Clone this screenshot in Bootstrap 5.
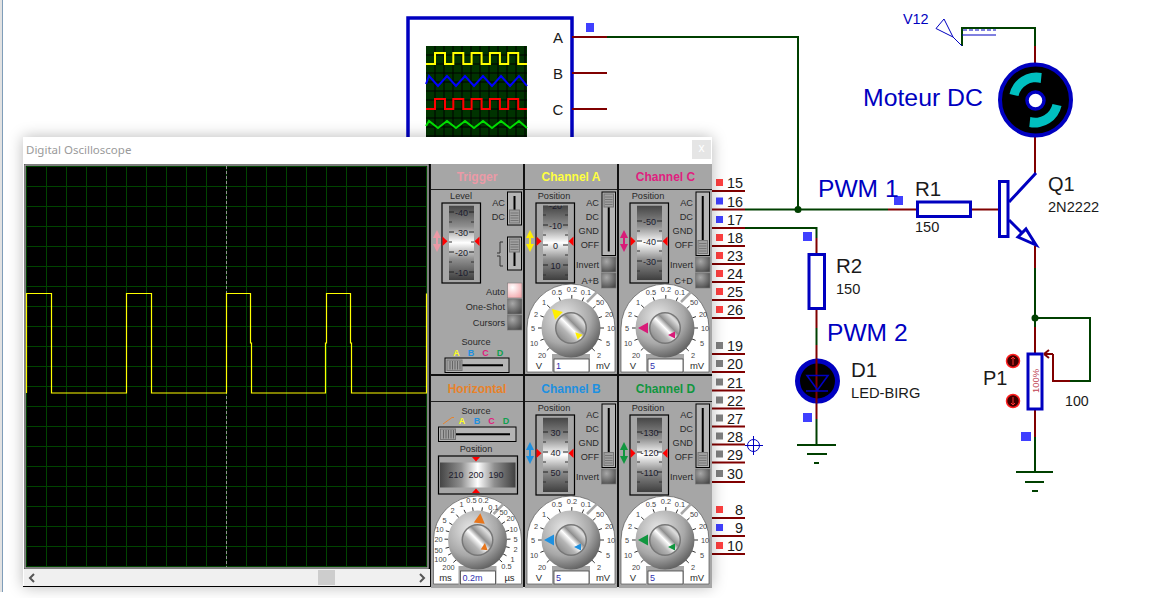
<!DOCTYPE html>
<html lang="fr">
<head>
  <meta charset="UTF-8">
  <title>Digital Oscilloscope</title>
  <link href="https://cdn.jsdelivr.net/npm/bootstrap@5.3.3/dist/css/bootstrap.min.css" rel="stylesheet">
  <style>
    body { background: #fff; overflow: hidden; font-family: "Liberation Sans", Arial, sans-serif; }
    .stage { width: 1154px; height: 598px; overflow: hidden; }
    .stage-edge { left: 0; top: 0; width: 3px; height: 592px; border-left: 2px solid #e2e2e2; border-right: 1px solid #7f9db9; }
    .sheet { left: 0; top: 0; }
    .sheet text { font-family: "Liberation Sans", Arial, sans-serif; }
    .scope-win { left: 23px; top: 137px; width: 689px; height: 450px; box-shadow: 0 0 14px rgba(0, 0, 0, .28); }
    .win-title { height: 27px; padding: 0 1px 2px 3px; }
    .win-title-text { font: 11.5px "Noto Sans", sans-serif; color: #9a9a9a; }
    .win-close { width: 19px; height: 19px; background: #e5e5e5; color: #fff; font-size: 12px; line-height: 17px; text-align: center; }
    .screen-col { width: 407px; padding-left: 1px; border-bottom: 1px solid #000; }
    .scope-screen { display: block; width: 406px; height: 405px; }
    .scroll-bar { height: 17px; width: 406px; background: #f0f0f0; padding: 0 4px; color: #555; }
    .scroll-thumb { left: 294px; top: 1px; width: 17px; height: 15px; background: #cdcdcd; }
    .scroll-arrow { width: 8px; height: 10px; }
    .panel-grid { display: grid; grid-template-columns: 92px 92px 93px; grid-template-rows: 210px 212px; gap: 2px; width: 282px; padding: 0 0 0 1px; background: #111; height: 423px; }
    .scope-panel { background: #a6a6a6; overflow: hidden; }
    .panel-head { height: 26px; border-bottom: 1px solid #222; font-weight: 700; font-size: 12px; line-height: 26px; text-align: center; }
    .panel-art { display: block; }
    .panel-art text { font-family: "Liberation Sans", Arial, sans-serif; }
  </style>
</head>
<body>
  <div class="stage position-relative">
    <svg width="0" height="0" class="position-absolute">
      <defs>
        <linearGradient id="drumV" x1="0" y1="0" x2="0" y2="1">
          <stop offset="0" stop-color="#454545"/><stop offset=".28" stop-color="#8f8f8f"/>
          <stop offset=".5" stop-color="#fff"/><stop offset=".72" stop-color="#8f8f8f"/><stop offset="1" stop-color="#3f3f3f"/>
        </linearGradient>
        <linearGradient id="drumH" x1="0" y1="0" x2="1" y2="0">
          <stop offset="0" stop-color="#454545"/><stop offset=".28" stop-color="#8f8f8f"/>
          <stop offset=".5" stop-color="#fff"/><stop offset=".72" stop-color="#8f8f8f"/><stop offset="1" stop-color="#3f3f3f"/>
        </linearGradient>
        <radialGradient id="btnGrey" cx=".35" cy=".3" r=".8">
          <stop offset="0" stop-color="#a8a8a8"/><stop offset="1" stop-color="#4a4a4a"/>
        </radialGradient>
        <radialGradient id="btnPink" cx=".35" cy=".3" r=".8">
          <stop offset="0" stop-color="#fff"/><stop offset="1" stop-color="#f2a8ac"/>
        </radialGradient>
        <radialGradient id="knobOut" cx=".38" cy=".32" r=".75">
          <stop offset="0" stop-color="#e8e8e8"/><stop offset=".6" stop-color="#a8a8a8"/><stop offset="1" stop-color="#555"/>
        </radialGradient>
        <linearGradient id="knobIn" x1="0" y1="1" x2="1" y2="0">
          <stop offset="0" stop-color="#777"/><stop offset=".35" stop-color="#b5b5b5"/><stop offset=".5" stop-color="#fff"/>
          <stop offset=".62" stop-color="#8f8f8f"/><stop offset=".8" stop-color="#ddd"/><stop offset="1" stop-color="#777"/>
        </linearGradient>
      </defs>
    </svg>

    <div class="stage-edge position-absolute"></div>

    <!-- schematic -->
    <svg class="sheet position-absolute" width="1154" height="598" viewBox="0 0 1154 598">
      <g id="instrument">
        <path d="M408 137V18H572V137" fill="#fff" stroke="#0000c0" stroke-width="3.5"/>
        <rect x="426" y="46" width="101" height="91" fill="#003300"/>
        <g id="miniGrid"></g>
        <g id="miniTraces" fill="none" stroke-width="2"></g>
        <g font-size="15" fill="#1a1a1a" text-anchor="middle">
          <text x="558" y="43">A</text><text x="558" y="79">B</text><text x="558" y="115">C</text>
        </g>
      </g>

      <g fill="none" stroke="#800000" stroke-width="2">
        <path d="M572 37H607M572 73H607M572 109H607"/>
        <path d="M888 209.5H916M972 209.5H1000"/>
        <path d="M816.5 238V253M816.5 310V328M816.5 345V419"/>
        <path d="M1035 46V63M1035 137V173M1035 246V268M1035 327V353M1035 410V437"/>
        <path d="M1070 381H1053V354"/>
        <path d="M1053 354H1044M1044 354L1049 350M1044 354L1049 358"/>
      </g>
      <g fill="none" stroke="#004000" stroke-width="2">
        <path d="M607 37H798V209.5"/>
        <path d="M745 209.5H888"/>
        <path d="M745 228H816.5V238"/>
        <path d="M816.5 328V345M816.5 419V445"/>
        <path d="M962 46V28H1035V46"/>
        <path d="M1035 268V327M1035 318H1090V381H1070M1035 437V472"/>
        <path d="M797 445H836M807 454H827M814 463H819"/>
        <path d="M1016 472H1053M1025 482H1044M1032 491H1038"/>
      </g>
      <circle cx="798" cy="209.5" r="3.5" fill="#004000"/>
      <circle cx="1035" cy="318" r="3.5" fill="#004000"/>

      <g id="pinRows"></g>

      <g fill="#4040ff">
        <rect x="586" y="23" width="8" height="9"/>
        <rect x="894" y="196" width="9" height="9"/>
        <rect x="803" y="232" width="9" height="9"/>
        <rect x="803" y="413" width="9" height="9"/>
        <rect x="1021" y="432" width="10" height="9"/>
      </g>

      <!-- V12 terminal -->
      <path d="M944 19L936 28.5L953 37ZM953 37L962 46" fill="none" stroke="#0000c0"/>
      <path d="M963 30H996" stroke="#0000c0" stroke-dasharray="4 2" fill="none"/>
      <path d="M962 35H996" stroke="#0000c0" fill="none"/>
      <text x="903" y="24" font-size="14.4" fill="#0000c0">V12</text>

      <!-- moteur -->
      <circle cx="1035.5" cy="100" r="35.5" fill="#000" stroke="#0000c0" stroke-width="4"/>
      <path d="M1041.7 73A27.5 27.5 0 0 0 1009.5 94L1018.5 96A17.5 17.5 0 0 1 1040.7 83Z" fill="#00c0c0"/>
      <path d="M1029.3 127A27.5 27.5 0 0 0 1061.5 106L1052.5 104A17.5 17.5 0 0 1 1030.3 117Z" fill="#00c0c0"/>
      <circle cx="1035.5" cy="100.5" r="8.5" fill="#fff" stroke="#0000c0" stroke-width="3.5"/>
      <text x="863" y="106" font-size="24.8" fill="#0000c0">Moteur DC</text>

      <!-- R1, Q1 -->
      <rect x="917.5" y="202" width="53" height="14.5" fill="#fff" stroke="#0000c0" stroke-width="3"/>
      <text x="915" y="196" font-size="20.5" fill="#1a1a1a">R1</text>
      <text x="915" y="232" font-size="14.6" fill="#1a1a1a">150</text>
      <text x="818" y="197" font-size="24.6" fill="#0000c0">PWM 1</text>
      <rect x="999.5" y="181.5" width="8.5" height="55" fill="#fff" stroke="#0000c0" stroke-width="3"/>
      <path d="M1009 202L1036 173M1009 220L1028 239" fill="none" stroke="#0000c0" stroke-width="3"/>
      <path d="M1026 229L1036 245L1018 237Z" fill="#fff" stroke="#0000c0" stroke-width="3"/>
      <text x="1048" y="191" font-size="20" fill="#1a1a1a">Q1</text>
      <text x="1048" y="212" font-size="14.6" fill="#1a1a1a">2N2222</text>

      <!-- R2, D1 -->
      <rect x="809" y="254.5" width="15.5" height="54" fill="#fff" stroke="#0000c0" stroke-width="3"/>
      <text x="836" y="273" font-size="20.5" fill="#1a1a1a">R2</text>
      <text x="836" y="294" font-size="14.6" fill="#1a1a1a">150</text>
      <text x="827" y="341" font-size="24.6" fill="#0000c0">PWM 2</text>
      <circle cx="817.5" cy="381" r="20" fill="#000" stroke="#0000c0" stroke-width="5"/>
      <path d="M816.5 359V403" stroke="#800000" stroke-width="2"/>
      <path d="M807 375.5H828L817.5 390ZM806 391H828" fill="none" stroke="#0000c0" stroke-width="1.6"/>
      <text x="851" y="377" font-size="20.5" fill="#1a1a1a">D1</text>
      <text x="851" y="398" font-size="14.7" fill="#1a1a1a">LED-BIRG</text>

      <!-- P1 -->
      <rect x="1028" y="354" width="14" height="55" fill="#fff" stroke="#0000c0" stroke-width="3"/>
      <text transform="translate(1038.5 381) rotate(-90)" font-size="9.4" fill="#c04050" text-anchor="middle">100%</text>
      <g fill="#400000" stroke="#ff2020" stroke-width="1.5">
        <circle cx="1013" cy="361" r="6.5"/><circle cx="1013" cy="401" r="6.5"/>
      </g>
      <path d="M1013 365V357M1011 359L1013 357L1015 359M1013 397V405M1011 403L1013 405L1015 403" fill="none" stroke="#ff3030"/>
      <text x="983" y="385" font-size="20" fill="#1a1a1a">P1</text>
      <text x="1065" y="406" font-size="14.2" fill="#1a1a1a">100</text>

      <!-- curseur -->
      <circle cx="753.5" cy="445.5" r="6" fill="none" stroke="#0000c0"/>
      <path d="M745 445.5H763M753.5 436V455" stroke="#0000c0" fill="none"/>
    </svg>

    <!-- fenetre oscilloscope -->
    <div class="scope-win position-absolute bg-white d-flex flex-column">
      <div class="win-title d-flex justify-content-between align-items-center bg-white">
        <span class="win-title-text">Digital Oscilloscope</span>
        <span class="win-close">x</span>
      </div>
      <div class="d-flex">
        <div class="screen-col bg-white">
          <svg class="scope-screen" viewBox="24 164 406 405" id="screen"></svg>
          <div class="scroll-bar position-relative d-flex justify-content-between align-items-center">
            <svg class="scroll-arrow" viewBox="0 0 8 10"><path d="M6 1L2 5L6 9" fill="none" stroke="#555" stroke-width="2"/></svg>
            <div class="scroll-thumb position-absolute"></div>
            <svg class="scroll-arrow" viewBox="0 0 8 10"><path d="M2 1L6 5L2 9" fill="none" stroke="#555" stroke-width="2"/></svg>
          </div>
        </div>
        <div class="panel-grid" id="panels"></div>
      </div>
    </div>
  </div>

  <script src="https://cdn.jsdelivr.net/npm/bootstrap@5.3.3/dist/js/bootstrap.bundle.min.js"></script>
  <script>
    // ---- petit ecran + lignes de pins du schema
    let s = '';
    for (let x = 435; x < 527; x += 9) s += `<path d="M${x} 46V137" stroke="#000"/>`;
    for (let y = 55; y < 137; y += 9) s += `<path d="M426 ${y}H527" stroke="#000"/>`;
    document.getElementById('miniGrid').innerHTML = s;

    function square(y0, y1) {
      let d = `M426 ${y1}H435`;
      for (let x = 435; x < 520; x += 18.3) d += `V${y0}H${x + 10}V${y1}H${Math.min(x + 18.3, 527)}`;
      return d + 'H527';
    }
    function zig(y0, y1) {
      let d = `M426 ${y1 - 2}`;
      for (let x = 429; x < 527; x += 18) d += `L${x} ${y0}L${Math.min(x + 9, 527)} ${y1}`;
      return d;
    }
    document.getElementById('miniTraces').innerHTML =
      `<path d="${square(53, 64)}" stroke="#ffff00"/>` +
      `<path d="${zig(76, 86)}" stroke="#0000ff"/>` +
      `<path d="${square(99, 109)}" stroke="#ff0000"/>` +
      `<path d="${zig(121, 128)}" stroke="#00e000"/>`;

    const pins = [
      [15, 191, 'r'], [16, 209.5, 'b'], [17, 228, 'b'], [18, 246, 'r'], [23, 264, 'r'], [24, 282, 'r'], [25, 300, 'r'], [26, 318, 'r'],
      [19, 354, 'g'], [20, 372, 'g'], [21, 390.5, 'g'], [22, 408.5, 'g'], [27, 426.5, 'g'], [28, 444.5, 'g'], [29, 462.5, 'g'], [30, 482, 'g'],
      [8, 518, 'r'], [9, 536, 'b'], [10, 554, 'r']
    ];
    const pinColor = { r: '#ff4040', b: '#4040ff', g: '#808080' };
    document.getElementById('pinRows').innerHTML = pins.map(([n, y, c]) =>
      `<path d="M712 ${y}H745" stroke="#800000" stroke-width="2"/>` +
      `<rect x="716" y="${y - 12}" width="7" height="7" fill="${pinColor[c]}"/>` +
      `<text x="743" y="${y - 3}" font-size="14.4" fill="#1a1a1a" text-anchor="end">${n}</text>`).join('');

    // ---- ecran de l'oscilloscope
    let scr = '<rect x="24" y="164" width="406" height="405" fill="#000"/>' +
      '<rect x="25" y="165" width="403" height="403" fill="none" stroke="#a8a8a8" stroke-width="1.5"/>';
    for (let i = 0; i <= 20; i++) {
      scr += `<path d="M${26.5 + i * 20} 166.5V566.5" stroke="#004400"/>`;
      scr += `<path d="M26.5 ${166.5 + i * 20}H426.5" stroke="#004400"/>`;
    }
    scr += '<path d="M226.5 166V567" stroke="#909090" stroke-dasharray="3 2"/>';
    scr += '<path d="M26.5 393V293.5H51.5V393H126.5V293.5H151.5V393H226.5V293.5H250.5V343H251.5V393H325.5V343H326.5V293.5H350.5V343H351.5V393H426.5V293.5" fill="none" stroke="#ffff00" stroke-width="1.2"/>';
    document.getElementById('screen').innerHTML = scr;

    // ---- panneaux
    const ink = '#2a2a2a', small = 9.2;
    function tri(x1, y1, x2, y2, x3, y3, fill) {
      return `<polygon points="${x1},${y1} ${x2},${y2} ${x3},${y3}" fill="${fill}"/>`;
    }
    function label(x, y, t, size, fill, anchor, extra) {
      return `<text x="${x}" y="${y}" font-size="${size}" fill="${fill}" text-anchor="${anchor || 'middle'}" ${extra || ''}>${t}</text>`;
    }
    function arrows(x, y0, y1, c) {
      return `<path d="M${x} ${y0 + 4}V${y1 - 4}" stroke="${c}" stroke-width="2"/>` +
        tri(x, y0, x - 4, y0 + 8, x + 4, y0 + 8, c) + tri(x, y1, x - 4, y1 - 8, x + 4, y1 - 8, c);
    }
    // slider vertical (pos 0 = haut, 1 = bas)
    function vSlider(x0, y0, x1, y1, pos) {
      const th = 13, ty = y0 + 2 + pos * (y1 - y0 - 4 - th), mx = (x0 + x1) / 2;
      let o = `<rect x="${x0}" y="${y0}" width="${x1 - x0}" height="${y1 - y0}" fill="#b5b5b5" stroke="#000"/>`;
      o += `<path d="M${mx} ${y0 + 4}V${y1 - 4}" stroke="#000" stroke-width="2"/>`;
      o += `<rect x="${x0 + 2}" y="${ty}" width="${x1 - x0 - 4}" height="${th}" fill="#a0a0a0" stroke="#777"/>`;
      for (let i = 3; i < th; i += 2.5) o += `<path d="M${x0 + 3} ${ty + i}H${x1 - 3}" stroke="#666" stroke-width=".7"/>`;
      return o;
    }
    function hSlider(x0, y0, x1, y1) {
      const my = (y0 + y1) / 2, tx = x0 + 2;
      let o = `<rect x="${x0}" y="${y0}" width="${x1 - x0}" height="${y1 - y0}" fill="#b5b5b5" stroke="#000"/>`;
      o += `<path d="M${x0 + 4} ${my}H${x1 - 6}" stroke="#000" stroke-width="2"/>`;
      o += `<rect x="${tx}" y="${y0 + 2}" width="15" height="${y1 - y0 - 4}" fill="#a0a0a0" stroke="#777"/>`;
      for (let i = 3; i < 15; i += 2.5) o += `<path d="M${tx + i} ${y0 + 3}V${y1 - 3}" stroke="#555" stroke-width=".8"/>`;
      return o;
    }
    function button(x, y, pink) {
      return `<rect x="${x}" y="${y}" width="14.5" height="15" fill="url(#${pink ? 'btnPink' : 'btnGrey'})" stroke="#777" stroke-width=".6"/>`;
    }
    // tambour gradue vertical, les chiffres sont coupes par la fenetre du tambour
    function drum(x0, nums) {
      let o = `<rect x="${x0}" y="203" width="38.5" height="80" fill="#a6a6a6" stroke="#000" stroke-width="1.2"/>`;
      o += `<svg x="${x0 + 7}" y="205.5" width="25" height="74.5" viewBox="${x0 + 7} 205.5 25 74.5">`;
      o += `<rect x="${x0 + 7}" y="205.5" width="25" height="74.5" fill="url(#drumV)"/>`;
      for (const [t, y] of nums) {
        o += `<path d="M${x0 + 7} ${y}h5M${x0 + 27} ${y}h5" stroke="#222"/>`;
        o += `<path d="M${x0 + 7} ${y + 10}h3M${x0 + 29} ${y + 10}h3" stroke="#333"/>`;
        o += label(x0 + 19.5, y + 3.5, t, 9, '#1d1d2f');
      }
      o += '</svg>';
      o += tri(x0 + .5, 236.5, x0 + 5.5, 241.3, x0 + .5, 246, '#ff0000');
      o += tri(x0 + 37.5, 236.5, x0 + 32.5, 241.3, x0 + 37.5, 246, '#ff0000');
      return o;
    }
    const voltLabels = [['0.5', -14, -36], ['0.2', 1, -39], ['0.1', 15, -36], ['1', -27, -26], ['2', -35, -14], ['5', -38, 0], ['10', -37, 15], ['20', -29, 27],
      ['50', 29, -26], ['20', 38, -14], ['10', 40, 0], ['5', 37, 15], ['2', 28, 27]];
    const timeLabels = [['200', -29, 27], ['100', -37, 19], ['50', -39, 10], ['20', -39, -1], ['10', -38, -11], ['5', -33, -20], ['2', -25, -30], ['1', -16, -36],
      ['0.5', -6, -40], ['0.2', 6, -40], ['0.1', 16, -33], ['50', 26, -28], ['20', 33, -22], ['10', 36, -11], ['5', 38, -1], ['2', 38, 9], ['1', 35, 19], ['0.5', 29, 26]];

    function dial(cx, cy, labels, left, right, value, angle, c) {
      let o = `<path d="M${cx - 44} ${cy + 44}V${cy}A44 44 0 0 1 ${cx + 44} ${cy}V${cy + 44}Z" fill="#fff" stroke="#555" stroke-width=".7"/>`;
      o += `<rect x="${cx - 19}" y="${cy + 26}" width="38" height="19" fill="#a6a6a6"/>`;
      o += `<path d="M${cx + 26} ${cy - 36}L${cx + 16} ${cy - 26}" stroke="#a6a6a6" stroke-width="2.5"/>`;
      for (const [t, dx, dy] of labels) {
        const r = Math.hypot(dx, dy), ux = dx / r, uy = dy / r;
        o += `<path d="M${cx + ux * 29} ${cy + uy * 29}L${cx + ux * 33} ${cy + uy * 33}" stroke="#333"/>`;
        o += label(cx + dx, cy + dy + 2.5, t, 7.4, '#444');
      }
      o += `<circle cx="${cx}" cy="${cy}" r="29.5" fill="url(#knobOut)"/>`;
      o += `<circle cx="${cx}" cy="${cy}" r="16" fill="#777"/>`;
      o += `<circle cx="${cx}" cy="${cy}" r="14.5" fill="url(#knobIn)"/>`;
      o += `<polygon transform="rotate(${angle} ${cx} ${cy})" points="${cx},${cy - 27} ${cx - 5.5},${cy - 17} ${cx + 5.5},${cy - 17}" fill="${c}"/>`;
      o += `<polygon transform="rotate(${angle} ${cx + 7} ${cy + 7})" points="${cx + 7},${cy + 3} ${cx + 3.5},${cy + 10} ${cx + 10.5},${cy + 10}" fill="${c}"/>`;
      o += `<rect x="${cx - 17}" y="${cy + 31}" width="35" height="13" fill="#fff" stroke="#444" stroke-width=".8"/>`;
      o += label(cx - 15, cy + 41, value, 9, '#3030b0', 'start');
      o += label(cx - 32, cy + 40.5, left, 9.5, ink);
      o += label(cx + 32, cy + 40.5, right, 9.5, ink);
      return o;
    }
    function chan(x, c, nums, pos, angle, extra, value) {
      let o = label(x + 29, 199, 'Position', small, ink);
      o += drum(x + 11, nums) + arrows(x + 5, 230, 252, c);
      [['AC', 206], ['DC', 220], ['GND', 234], ['OFF', 248]].forEach(([t, y]) => { o += label(x + 74, y, t, small, ink, 'end'); });
      o += vSlider(x + 77, 192, x + 90.5, 255.5, pos);
      o += label(x + 74, 268, 'Invert', small, ink, 'end') + button(x + 76.5, 257);
      if (extra) o += label(x + 74, 284, extra, small, ink, 'end') + button(x + 76.5, 273);
      o += dial(x + 46, 328, voltLabels, 'V', 'mV', value, angle, c);
      return o;
    }
    function sourceRow(xs, y) {
      return [['A', '#ffff20'], ['B', '#1e90e0'], ['C', '#e0207f'], ['D', '#10a050']]
        .map(([t, c], i) => label(xs[i], y, t, 9, c, 'middle', 'font-weight="700"')).join('');
    }
    function triggerArt() {
      let o = label(461, 199, 'Level', small, ink);
      o += drum(442, [['-40', 212], ['-30', 232], ['-20', 252], ['-10', 272]]) + arrows(437, 230, 252, '#eb9aa6');
      o += label(505, 206, 'AC', small, ink, 'end') + label(505, 220, 'DC', small, ink, 'end');
      o += vSlider(507.5, 192, 521.5, 225, 1) + vSlider(507.5, 237, 521.5, 270, 0);
      o += '<path d="M497 253H500V242H503M497 256H500V266H503" fill="none" stroke="#333"/>';
      o += label(505, 295, 'Auto', small, ink, 'end') + button(507.5, 283, true);
      o += label(505, 310, 'One-Shot', small, ink, 'end') + button(507.5, 299);
      o += label(505, 326, 'Cursors', small, ink, 'end') + button(507.5, 315);
      o += label(476, 345, 'Source', small, ink) + sourceRow([456.5, 471, 485.5, 500], 356);
      o += hSlider(445, 358, 509, 372.5);
      return o;
    }
    function horizontalArt() {
      let o = label(476, 414, 'Source', small, ink);
      o += '<path d="M443 424L452 417.5H454" fill="none" stroke="#e8822a"/>' + sourceRow([462, 477, 491.5, 506], 424);
      o += hSlider(438.5, 427, 516, 441.5);
      o += label(476, 452, 'Position', small, ink);
      o += '<rect x="438.5" y="456" width="79" height="38" fill="#a6a6a6" stroke="#000" stroke-width="1.2"/>';
      o += '<rect x="440" y="462.5" width="75.5" height="25" fill="url(#drumH)"/>';
      [['210', 456], ['200', 476], ['190', 496]].forEach(([t, x]) => { o += label(x, 478, t, 9, '#1d1d2f'); });
      o += tri(472, 457, 480, 457, 476, 461.5, '#ff0000') + tri(472, 493, 480, 493, 476, 488.5, '#ff0000');
      o += dial(477.5, 540, timeLabels, 'ms', 'µs', '0.2m', 6, '#e8751a');
      return o;
    }

    const defs = [
      { name: 'Trigger', color: '#eb9aa6', x: 431, y: 190, w: 92, h: 184, art: triggerArt },
      { name: 'Channel A', color: '#ffff40', x: 525, y: 190, w: 92, h: 184, art: () =>
        chan(525, '#ffee00', [['-20', 205], ['-10', 225], ['0', 245], ['10', 265]], 0, -45, 'A+B', '1') },
      { name: 'Channel C', color: '#e0207f', x: 619, y: 190, w: 93, h: 184, art: () =>
        chan(619, '#d81b78', [['-50', 221], ['-40', 241], ['-30', 261]], 1, -90, 'C+D', '5') },
      { name: 'Horizontal', color: '#e8822a', x: 431, y: 402, w: 92, h: 186, art: horizontalArt },
      { name: 'Channel B', color: '#1e90e0', x: 525, y: 190, w: 92, h: 186, art: () =>
        chan(525, '#1e90e0', [['30', 220], ['40', 240], ['50', 260]], 1, -90, '', '5') },
      { name: 'Channel D', color: '#10963f', x: 619, y: 190, w: 93, h: 186, art: () =>
        chan(619, '#10963f', [['-130', 220], ['-120', 240], ['-110', 260]], 1, -90, '', '5') }
    ];
    document.getElementById('panels').innerHTML = defs.map(p =>
      `<div class="scope-panel"><div class="panel-head" style="color:${p.color}">${p.name}</div>` +
      `<svg class="panel-art" width="${p.w}" height="${p.h}" viewBox="${p.x} ${p.y} ${p.w} ${p.h}">${p.art()}</svg></div>`).join('');
  </script>
</body>
</html>
